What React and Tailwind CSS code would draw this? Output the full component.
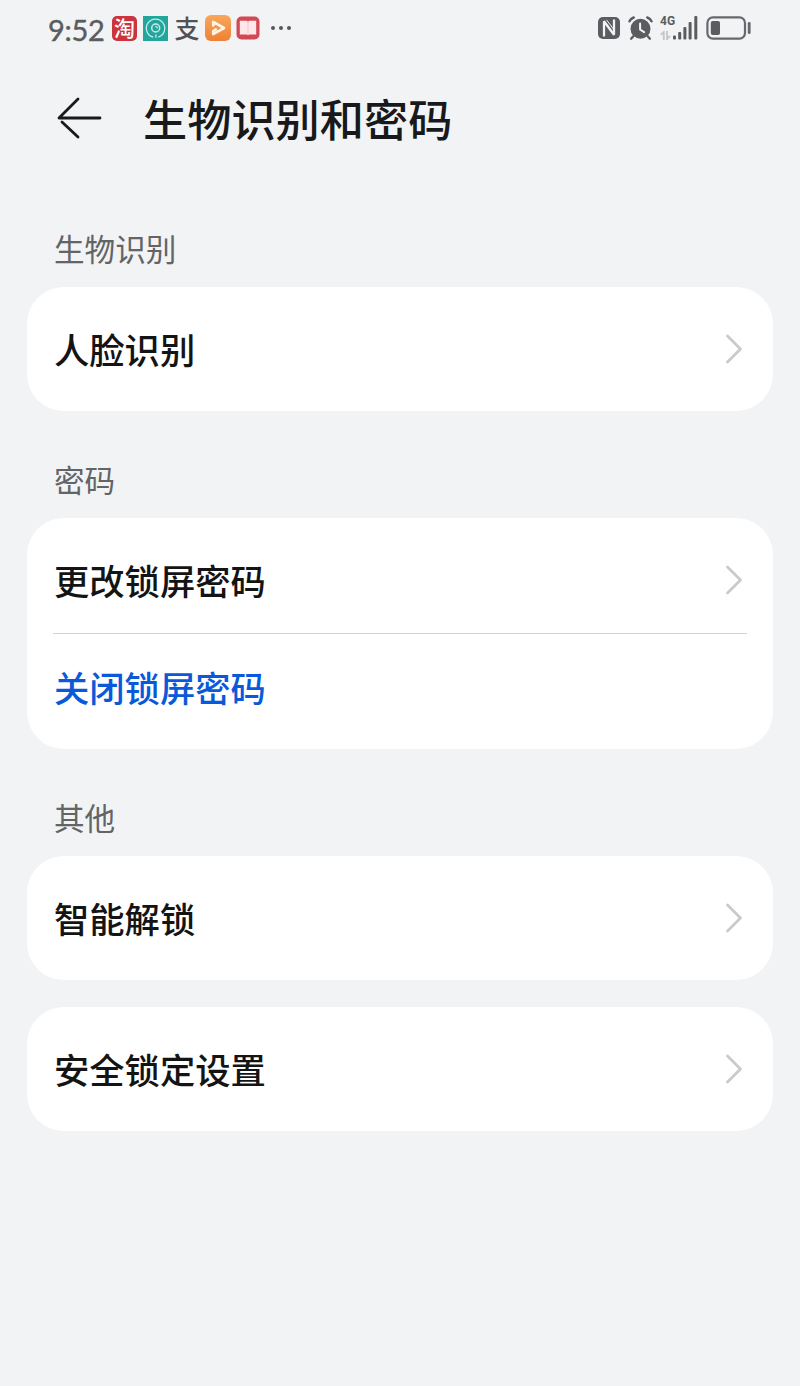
import React from 'react';

function StatusIcons() {
  return (
    <div className="flex items-center">
      <div className="flex h-[25px] w-[25px] items-center justify-center rounded-[5px] bg-[#cb343d]">
        <span className="-mt-[3px] text-[21px] leading-[24px] font-medium text-white">淘</span>
      </div>
      <svg className="ml-[6px] h-[25px] w-[25px]" viewBox="0 0 25 25" fill="none" stroke="#c5ece7">
        <rect width="25" height="25" fill="#22a59d" stroke="none" />
        <path d="M10.2 21.2a9.2 9.2 0 1 1 5-.1M12.9 18.6v3.2" strokeWidth="1.3" />
        <circle cx="12.7" cy="12" r="4" strokeWidth="1.5" />
        <path d="M12.3 10.4a2 2 0 0 1 2 2" strokeWidth="1.2" />
      </svg>
      <span className="-mt-[2px] ml-[6px] w-[26px] text-center text-[25px] leading-[25px] font-medium text-[#505255]">支</span>
      <svg className="ml-[5px] h-[26px] w-[26px]" viewBox="0 0 26 26">
        <defs>
          <linearGradient id="video" x1="0" y1="0" x2="0" y2="1">
            <stop offset="0" stopColor="#f7a85e" />
            <stop offset="1" stopColor="#ee8134" />
          </linearGradient>
        </defs>
        <rect width="26" height="26" rx="6" fill="url(#video)" />
        <path d="M8.2 10.6V6.8L19 13 8.2 19.2V16l2.6-1.6" fill="none" stroke="#fff3e4" strokeWidth="2.6" strokeLinejoin="round" strokeLinecap="round" />
      </svg>
      <svg className="ml-[5px] h-[24px] w-[24px]" viewBox="0 0 24 24">
        <rect x=".5" y=".5" width="23" height="23" rx="5" fill="#d34855" />
        <path d="M3.8 4.8h7l1.2.9 1.2-.9h7v13.7h-7l-1.2.8-1.2-.8h-7z" fill="#ffe7e9" />
        <path d="M12 5.5v13.5" stroke="#f3c3c8" strokeWidth="1" />
      </svg>
      <svg className="ml-[10px] h-[6px] w-[22px]" viewBox="0 0 22 6" fill="#55575a">
        <circle cx="3" cy="3" r="2" />
        <circle cx="11" cy="3" r="2" />
        <circle cx="19" cy="3" r="2" />
      </svg>
    </div>
  );
}

function SystemIcons() {
  return (
    <div className="flex items-center">
      {/* NFC */}
      <svg className="h-[24px] w-[24px]" viewBox="0 0 24 24">
        <rect x="1" y="1" width="22" height="22" rx="5" fill="#5a5c5f" />
        <path d="M7 20.5V5.2L17 18.8V3.5" fill="none" stroke="#f1f3f5" strokeWidth="2.3" strokeLinejoin="bevel" />
        <path d="M9.5 3.8l7.5 10M7 12" fill="none" stroke="#f1f3f5" strokeWidth="1" />
      </svg>
      {/* alarm */}
      <svg className="ml-[7px] h-[26px] w-[26px]" viewBox="0 0 26 26" fill="none" stroke="#5a5c5f" strokeLinecap="round">
        <circle cx="12.5" cy="13.8" r="10" fill="#5a5c5f" stroke="none" />
        <path d="M1.5 6.3Q2.7 3.6 5.7 2.5M23.5 6.3q-1.2-2.7-4.2-3.8" strokeWidth="2.4" />
        <path d="M5.5 21l-2.4 2.7M19.5 21l2.4 2.7" strokeWidth="2.4" />
        <path d="M12.1 8.5v6l4 2.7" stroke="#f1f3f5" strokeWidth="2" />
      </svg>
      {/* mobile signal */}
      <div className="ml-[6px] flex h-[24px] items-end">
        <div className="flex h-full w-[13px] flex-col justify-between">
          <span className="font-['Roboto',sans-serif] text-[12px] leading-[11px] font-bold text-[#5a5c5f]">4G</span>
          <svg className="h-[9px] w-[12px]" viewBox="0 0 12 9" fill="none" stroke="#c3c5c7" strokeWidth="1.8">
            <path d="M.8 3.8 3.8 1v8M7 0v8l3-3.2" />
          </svg>
        </div>
        <svg className="h-[24px] w-[25px]" viewBox="0 0 25 24" fill="#5a5c5f">
          <rect x="0" y="19.5" width="3" height="4" rx="1" />
          <rect x="5.2" y="16" width="3" height="7.5" rx="1" />
          <rect x="10.4" y="11" width="3" height="12.5" rx="1" />
          <rect x="15.6" y="6" width="3" height="17.5" rx="1" />
          <rect x="21.3" y="0" width="3" height="23.5" rx="1" />
        </svg>
      </div>
      {/* battery */}
      <svg className="ml-[8px] h-[24px] w-[46px]" viewBox="0 0 46 24">
        <rect x="1.4" y="1.4" width="37.6" height="21.2" rx="5.5" fill="none" stroke="#66686b" strokeWidth="2.2" />
        <rect x="4.8" y="4.9" width="9.2" height="14.2" rx="2" fill="#5a5c5f" />
        <rect x="41.8" y="6" width="2.8" height="12" rx="1.2" fill="#66686b" />
      </svg>
    </div>
  );
}

function Chevron() {
  return (
    <svg className="h-[32px] w-[20px]" viewBox="0 0 20 32" fill="none" stroke="#c9cacb" strokeWidth="2.8" strokeLinecap="round" strokeLinejoin="round">
      <path d="M3.5 3 16.5 16 3.5 29" />
    </svg>
  );
}

function SectionLabel({ children }) {
  return <h2 className="px-[54px] text-[30.6px] leading-[44px] text-[#626466]">{children}</h2>;
}

function Card({ children }) {
  return <div className="mx-[27px] rounded-[37px] bg-white px-[27px]">{children}</div>;
}

function Row({ label, className = 'h-[124px]' }) {
  return (
    <div className={`flex items-center justify-between pr-[2px] ${className}`}>
      <span className="text-[35.3px] leading-[44px] font-medium text-[#141414]">{label}</span>
      <Chevron />
    </div>
  );
}

function App() {
  return (
    <div className="min-h-screen bg-[#f1f3f5] font-['Noto_Sans_CJK_SC',sans-serif]">
      <div className="flex h-[56px] items-center justify-between pr-[48px] pl-[48px]">
        <div className="flex items-center">
          <span className="w-[64px] pt-[3px] font-['Lato',sans-serif] text-[29px] leading-[53px] tracking-[-0.3px] text-[#5a5c5f] [-webkit-text-stroke:0.4px_#5a5c5f]">9:52</span>
          <StatusIcons />
        </div>
        <SystemIcons />
      </div>

      <header className="flex h-[124px] items-center pl-[56px]">
        <svg className="h-[44px] w-[46px]" viewBox="0 0 46 44" fill="none" stroke="#18191a" strokeWidth="2.8" strokeLinecap="round" strokeLinejoin="round">
          <path d="M44 22H3L22 3M6 26l16 15" />
        </svg>
        <h1 className="ml-[41px] text-[44.2px] leading-[60px] font-medium text-[#18191a]">生物识别和密码</h1>
      </header>

      <main className="pt-[46px]">
        <section>
          <SectionLabel>生物识别</SectionLabel>
          <div className="mt-[17px]">
            <Card>
              <Row label="人脸识别" />
            </Card>
          </div>
        </section>

        <section className="mt-[46px]">
          <SectionLabel>密码</SectionLabel>
          <div className="mt-[17px]">
            <Card>
              <Row label="更改锁屏密码" className="h-[115px] pt-[9px]" />
              <div className="-mx-px h-px bg-[#d2d3d4]" />
              <div className="flex h-[115px] items-center pb-[9px]">
                <span className="text-[35.3px] leading-[44px] font-medium text-[#0a59d8]">关闭锁屏密码</span>
              </div>
            </Card>
          </div>
        </section>

        <section className="mt-[46px]">
          <SectionLabel>其他</SectionLabel>
          <div className="mt-[17px] flex flex-col gap-[27px]">
            <Card>
              <Row label="智能解锁" />
            </Card>
            <Card>
              <Row label="安全锁定设置" />
            </Card>
          </div>
        </section>
      </main>
    </div>
  );
}

export default App;
